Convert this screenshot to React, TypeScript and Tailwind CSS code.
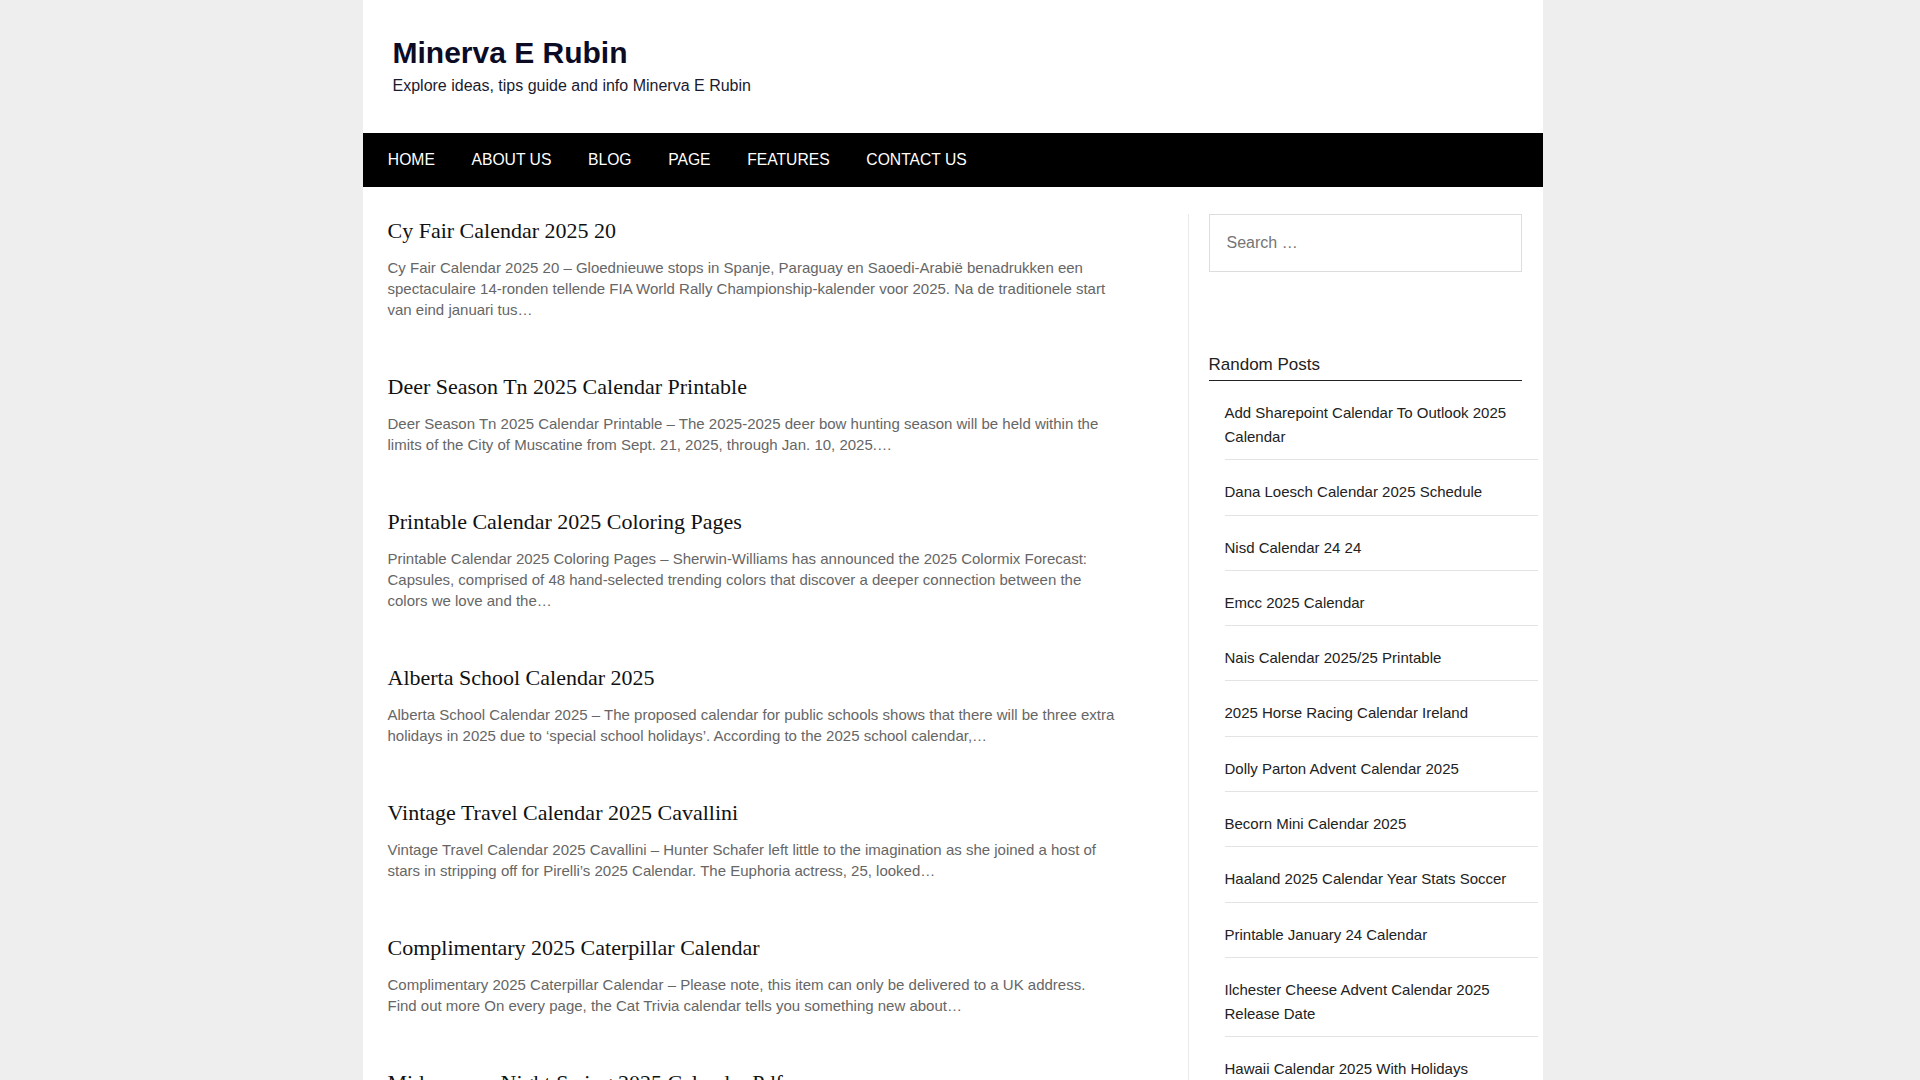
const navItems = ['HOME', 'ABOUT US', 'BLOG', 'PAGE', 'FEATURES', 'CONTACT US'];

const posts = [
    {
        title: 'Cy Fair Calendar 2025 20',
        excerpt:
            'Cy Fair Calendar 2025 20 – Gloednieuwe stops in Spanje, Paraguay en Saoedi-Arabië benadrukken een spectaculaire 14-ronden tellende FIA World Rally Championship-kalender voor 2025. Na de traditionele start van eind januari tus…',
    },
    {
        title: 'Deer Season Tn 2025 Calendar Printable',
        excerpt:
            'Deer Season Tn 2025 Calendar Printable – The 2025-2025 deer bow hunting season will be held within the limits of the City of Muscatine from Sept. 21, 2025, through Jan. 10, 2025.…',
    },
    {
        title: 'Printable Calendar 2025 Coloring Pages',
        excerpt:
            'Printable Calendar 2025 Coloring Pages – Sherwin-Williams has announced the 2025 Colormix Forecast: Capsules, comprised of 48 hand-selected trending colors that discover a deeper connection between the colors we love and the…',
    },
    {
        title: 'Alberta School Calendar 2025',
        excerpt:
            'Alberta School Calendar 2025 – The proposed calendar for public schools shows that there will be three extra holidays in 2025 due to ‘special school holidays’. According to the 2025 school calendar,…',
    },
    {
        title: 'Vintage Travel Calendar 2025 Cavallini',
        excerpt:
            'Vintage Travel Calendar 2025 Cavallini – Hunter Schafer left little to the imagination as she joined a host of stars in stripping off for Pirelli’s 2025 Calendar. The Euphoria actress, 25, looked…',
    },
    {
        title: 'Complimentary 2025 Caterpillar Calendar',
        excerpt:
            'Complimentary 2025 Caterpillar Calendar – Please note, this item can only be delivered to a UK address. Find out more On every page, the Cat Trivia calendar tells you something new about…',
    },
    {
        title: 'Midsummer Night Swing 2025 Calendar Pdf',
        excerpt: 'Midsummer Night Swing 2025 Calendar Pdf – …',
    },
];

const randomPosts = [
    'Add Sharepoint Calendar To Outlook 2025 Calendar',
    'Dana Loesch Calendar 2025 Schedule',
    'Nisd Calendar 24 24',
    'Emcc 2025 Calendar',
    'Nais Calendar 2025/25 Printable',
    '2025 Horse Racing Calendar Ireland',
    'Dolly Parton Advent Calendar 2025',
    'Becorn Mini Calendar 2025',
    'Haaland 2025 Calendar Year Stats Soccer',
    'Printable January 24 Calendar',
    'Ilchester Cheese Advent Calendar 2025 Release Date',
    'Hawaii Calendar 2025 With Holidays',
];

export default function App() {
    return (
        <div className="h-screen overflow-y-scroll bg-[#eeeeee] pr-[15px] font-['Liberation_Sans',Arial,sans-serif]">
            <div className="w-[1180px] mx-auto bg-white">
                <header className="pt-[34px] pb-[35px] pl-[30px]">
                    <h1 className="text-[30px] leading-[38px] font-bold text-[#0b0b26]">Minerva E Rubin</h1>
                    <p className="mt-[2px] text-[16px] leading-[24px] text-[#1b1b30]">
                        Explore ideas, tips guide and info Minerva E Rubin
                    </p>
                </header>

                <nav className="bg-black h-[54px] flex items-center pl-[7px]">
                    {navItems.map((item) => (
                        <a key={item} className="px-[18.3px] text-white text-[15.7px] leading-[54px]">
                            {item}
                        </a>
                    ))}
                </nav>

                <div className="flex pt-[27px]">
                    <main className="w-[826px] shrink-0 pl-[25px] pr-[72px] pt-[3px] border-r border-[#eaeaea]">
                        {posts.map((post) => (
                            <article key={post.title} className="mb-[53px]">
                                <h2 className="font-['Liberation_Serif','Times_New_Roman',serif] text-[22px] leading-[28px] text-[#111]">
                                    {post.title}
                                </h2>
                                <p className="mt-[12px] text-[15px] leading-[21px] text-[#666]">{post.excerpt}</p>
                            </article>
                        ))}
                    </main>

                    <aside className="flex-1 min-w-0 pl-[20px] pr-[21px]">
                        <div className="h-[58px] border border-[#dddddd] flex items-center px-[17px]">
                            <input
                                type="search"
                                placeholder="Search …"
                                className="w-full bg-transparent outline-none text-[16px] text-[#333] placeholder:text-[#757575]"
                            />
                        </div>

                        <h3 className="mt-[81px] pb-[3px] text-[17px] leading-[24px] text-[#222] border-b border-[#222]">
                            Random Posts
                        </h3>
                        <ul className="ml-4 w-[313px]">
                            {randomPosts.map((p) => (
                                <li
                                    key={p}
                                    className="pt-[20px] pb-[10.3px] border-b border-[#e3e3e3] text-[15px] leading-[24px] text-[#222]"
                                >
                                    <a>{p}</a>
                                </li>
                            ))}
                        </ul>
                    </aside>
                </div>
            </div>
        </div>
    );
}
